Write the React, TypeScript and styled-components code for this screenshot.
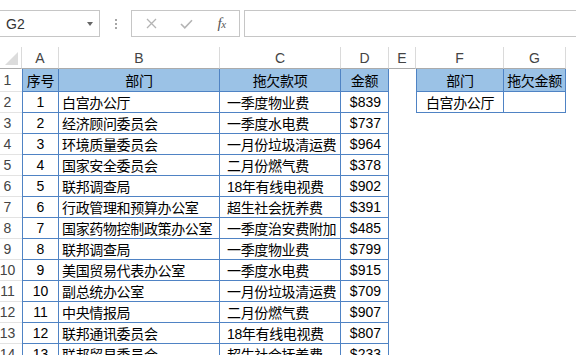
import React from 'react'
import styled, { createGlobalStyle } from 'styled-components'

const BLUE = '#4f83c4'
const HEAD_FILL = '#9bc2e6'
const FONT = '"Liberation Sans", "Noto Sans CJK SC", sans-serif'

const GlobalStyle = createGlobalStyle`
  html, body {
    margin: 0;
    padding: 0;
    background: #fff;
  }
  body {
    font-family: ${FONT};
  }
`

const Window = styled.div`
  width: 576px;
  height: 355px;
  overflow: hidden;
  background: #fff;
  display: flex;
  flex-direction: column;
`

const FormulaBar = styled.div`
  display: flex;
  align-items: stretch;
  height: 27px;
  margin-top: 10px;
  flex-shrink: 0;
`

const NameBox = styled.div`
  box-sizing: border-box;
  width: 101px;
  margin-left: -1px;
  border: 1px solid #c6c6c6;
  display: flex;
  align-items: center;
  justify-content: space-between;
  padding: 0 6px 0 6px;
  font-size: 14px;
  color: #333;
`

const Caret = styled.span`
  width: 0;
  height: 0;
  border-left: 3.5px solid transparent;
  border-right: 3.5px solid transparent;
  border-top: 4px solid #666;
`

const Grip = styled.div`
  width: 31px;
  display: flex;
  flex-direction: column;
  align-items: center;
  justify-content: center;
  gap: 2px;

  span {
    width: 2px;
    height: 2px;
    background: #a6a6a6;
  }
`

const ActionBox = styled.div`
  box-sizing: border-box;
  width: 109px;
  border: 1px solid #c6c6c6;
  display: grid;
  grid-template-columns: repeat(3, 35px);
  padding-left: 2px;
  align-items: center;
  justify-items: center;
`

const Fx = styled.span`
  font-family: "Liberation Serif", serif;
  font-style: italic;
  font-size: 15px;
  color: #555;
  letter-spacing: -0.5px;

  small {
    font-size: 11px;
  }
`

const FormulaInput = styled.div`
  flex: 1;
  margin-left: 4px;
  border: 1px solid #c6c6c6;
  border-right: none;
`

const Sheet = styled.div`
  margin-top: 10px;
  display: grid;
  grid-template-columns: 22px 37px 161px 121px 48px 27px 88px 62px 1fr;
  grid-template-rows: 22px 23px repeat(13, 21px);
  font-family: ${FONT};
`

const Corner = styled.div`
  box-sizing: border-box;
  border-right: 1px solid #dadada;
  border-bottom: 1px solid #ababab;
  display: flex;
  align-items: flex-end;
  justify-content: flex-end;
  padding: 0 3px 3px 0;
`

const ColHead = styled.div<{ $last?: boolean }>`
  box-sizing: border-box;
  border-right: 1px solid #dadada;
  border-bottom: 1px solid #ababab;
  display: flex;
  align-items: center;
  justify-content: center;
  font-size: 14px;
  color: #444;
`

const ColFill = styled.div``

const RowHead = styled.div`
  box-sizing: border-box;
  border-bottom: 1px solid #e3e3e3;
  display: flex;
  align-items: center;
  justify-content: center;
  padding-right: 7px;
  font-size: 14px;
  color: #444;
  overflow: hidden;
  white-space: nowrap;
`

type Align = 'left' | 'center' | 'right'

const justify = { left: 'flex-start', center: 'center', right: 'flex-end' }

const Cell = styled.div<{
  $align?: Align
  $fill?: boolean
  $boxed?: boolean
  $edge?: boolean
  $indent?: number
  $cjk?: boolean
}>`
  box-sizing: border-box;
  display: flex;
  align-items: center;
  justify-content: ${(p) => justify[p.$align || 'left']};
  padding-left: ${(p) => p.$indent || 0}px;
  padding-right: ${(p) => (p.$align === 'right' ? 7 : 0)}px;
  background: ${(p) => (p.$fill ? HEAD_FILL : 'transparent')};
  border-right: 1px solid ${(p) => (p.$boxed ? BLUE : 'transparent')};
  border-bottom: 1px solid ${(p) => (p.$boxed ? BLUE : 'transparent')};
  border-left: ${(p) => (p.$edge ? `1px solid ${BLUE}` : 'none')};
  font-size: 14px;
  letter-spacing: ${(p) => (p.$cjk ? '-0.35px' : '0')};
  color: #000;
  white-space: nowrap;
  overflow: hidden;
`

const columns = ['A', 'B', 'C', 'D', 'E', 'F', 'G']

const data = [
  ['1', '白宫办公厅', '一季度物业费', '$839'],
  ['2', '经济顾问委员会', '一季度水电费', '$737'],
  ['3', '环境质量委员会', '一月份垃圾清运费', '$964'],
  ['4', '国家安全委员会', '二月份燃气费', '$378'],
  ['5', '联邦调查局', '18年有线电视费', '$902'],
  ['6', '行政管理和预算办公室', '超生社会抚养费', '$391'],
  ['7', '国家药物控制政策办公室', '一季度治安费附加', '$485'],
  ['8', '联邦调查局', '一季度物业费', '$799'],
  ['9', '美国贸易代表办公室', '一季度水电费', '$915'],
  ['10', '副总统办公室', '一月份垃圾清运费', '$709'],
  ['11', '中央情报局', '二月份燃气费', '$907'],
  ['12', '联邦通讯委员会', '18年有线电视费', '$807'],
  ['13', '联邦贸易委员会', '超生社会抚养费', '$233'],
]

const lookup = [
  ['部门', '拖欠金额'],
  ['白宫办公厅', ''],
]

const SelectAll = () => (
  <svg width="13" height="13" viewBox="0 0 13 13">
    <polygon points="13,0 13,13 0,13" fill="#dcdcdc" />
  </svg>
)

const CancelIcon = () => (
  <svg width="11" height="11" viewBox="0 0 11 11">
    <path d="M1 1 L10 10 M10 1 L1 10" stroke="#b4b4b4" strokeWidth="1.3" fill="none" />
  </svg>
)

const EnterIcon = () => (
  <svg width="13" height="10" viewBox="0 0 13 10">
    <path d="M1 5 L4.8 8.8 L12 1.2" stroke="#b4b4b4" strokeWidth="1.6" fill="none" />
  </svg>
)

const LookupCells: React.FC<{ row: number }> = ({ row }) => {
  const values = lookup[row]
  if (!values) {
    return (
      <>
        <Cell />
        <Cell />
      </>
    )
  }
  const header = row === 0
  return (
    <>
      <Cell $boxed $edge $fill={header} $align="center" $cjk>
        {values[0]}
      </Cell>
      <Cell $boxed $fill={header} $align="center" $cjk>
        {values[1]}
      </Cell>
    </>
  )
}

const App: React.FC = () => {
  return (
    <Window>
      <GlobalStyle />
      <FormulaBar>
        <NameBox>
          G2
          <Caret />
        </NameBox>
        <Grip>
          <span />
          <span />
          <span />
        </Grip>
        <ActionBox>
          <CancelIcon />
          <EnterIcon />
          <Fx>
            f<small>x</small>
          </Fx>
        </ActionBox>
        <FormulaInput />
      </FormulaBar>

      <Sheet>
        <Corner>
          <SelectAll />
        </Corner>
        {columns.map((c) => (
          <ColHead key={c}>{c}</ColHead>
        ))}
        <ColFill />

        <RowHead>1</RowHead>
        <Cell $boxed $edge $fill $align="center" $cjk>序号</Cell>
        <Cell $boxed $fill $align="center" $cjk>部门</Cell>
        <Cell $boxed $fill $align="center" $cjk>拖欠款项</Cell>
        <Cell $boxed $fill $align="center" $cjk>金额</Cell>
        <Cell />
        <LookupCells row={0} />
        <Cell />

        {data.map((r, i) => (
          <React.Fragment key={r[0]}>
            <RowHead>{i + 2}</RowHead>
            <Cell $boxed $edge $align="center">{r[0]}</Cell>
            <Cell $boxed $indent={3} $cjk>{r[1]}</Cell>
            <Cell $boxed $indent={7} $cjk>{r[2]}</Cell>
            <Cell $boxed $align="right">{r[3]}</Cell>
            <Cell />
            <LookupCells row={i + 1} />
            <Cell />
          </React.Fragment>
        ))}
      </Sheet>
    </Window>
  )
}

export default App
